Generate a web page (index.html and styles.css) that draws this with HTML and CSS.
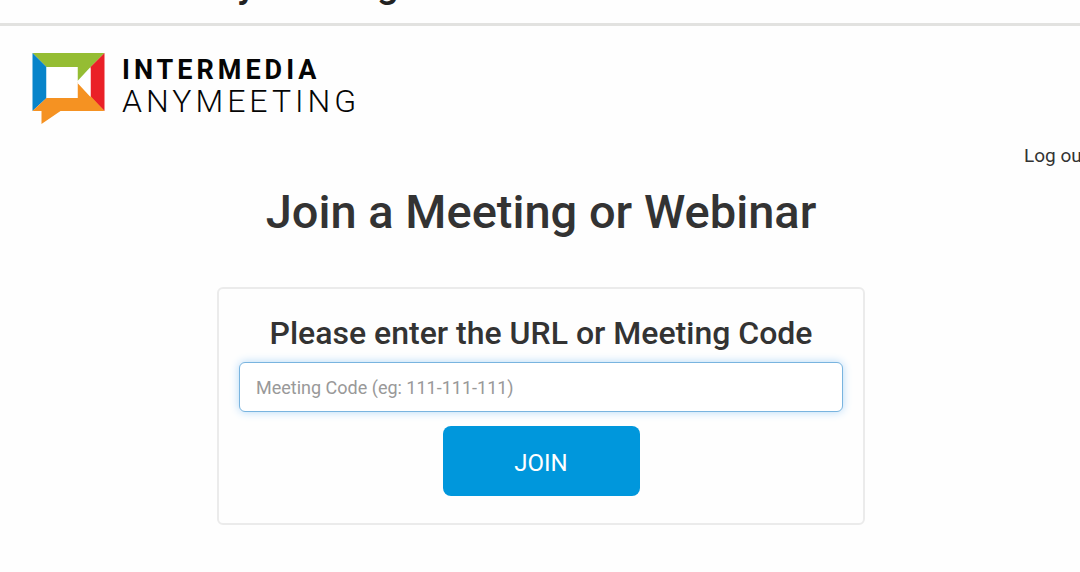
FILE: index.html
```html
<!DOCTYPE html>
<html lang="en">
<head>
<meta charset="utf-8">
<meta name="viewport" content="width=device-width, initial-scale=1">
<title>AnyMeeting</title>
<link rel="stylesheet" href="styles.css">
</head>
<body>
<div class="titlebar"><span class="titlebar-text">AnyMeeting</span></div>
<header class="header">
  <div class="brand">
    <svg class="brand-mark" viewBox="0 0 72 72" aria-hidden="true">
      <path fill="#95bd33" d="M0 0H72L58 14L45 28V14H14Z"/>
      <path fill="#0784ca" d="M0 0L14 14V45L0 58Z"/>
      <path fill="#ea2027" d="M72 0V58L58 44V14Z"/>
      <path fill="#f59222" d="M0 58L14 45H45V29L72 58H28L9 71V58Z"/>
      <path fill="#fff" d="M14 14H45V45H14ZM45 30L58 15V44Z"/>
    </svg>
    <div class="brand-name">
      <span class="brand-company">INTERMEDIA</span>
      <span class="brand-product">ANYMEETING</span>
    </div>
  </div>
  <nav class="account"><a class="logout" href="#">Log out</a></nav>
</header>
<main class="main">
  <h1 class="title">Join a Meeting or Webinar</h1>
  <form class="card">
    <label class="card-label" for="code">Please enter the URL or Meeting Code</label>
    <input class="code-input" id="code" type="text" placeholder="Meeting Code (eg: 111-111-111)">
    <button class="join" type="button">JOIN</button>
  </form>
</main>
</body>
</html>
```
FILE: styles.css
```css
* { box-sizing: border-box; }
body {
  margin: 0;
  background: #fefefe;
  color: #333;
  font-family: Roboto, "Liberation Sans", sans-serif;
  overflow-x: hidden;
}
.titlebar {
  display: flex;
  align-items: flex-end;
  height: 26px;
  padding: 0 0 19px 190px;
  border-bottom: 3px solid #e2e2e0;
  overflow: hidden;
}
.titlebar-text {
  color: #222;
  font-size: 39px;
  font-weight: 500;
  line-height: 40px;
}
.header { padding: 27px 0 0 32px; }
.brand { display: flex; gap: 17px; }
.brand-mark { width: 73px; height: 72px; }
.brand-name {
  display: flex;
  flex-direction: column;
  color: #050505;
}
.brand-company {
  font-size: 27px;
  font-weight: 700;
  line-height: 34px;
  letter-spacing: 4px;
}
.brand-product {
  font-size: 32px;
  font-weight: 300;
  line-height: 28px;
  letter-spacing: 4px;
}
.account {
  display: flex;
  justify-content: flex-end;
  margin-top: 19px;
  margin-right: -8px;
}
.logout {
  color: #333;
  font-size: 19px;
  line-height: 24px;
  text-decoration: none;
}
.main { padding: 16px 16px 40px 18px; }
.title {
  margin: 0 0 47px;
  font-size: 47px;
  font-weight: 500;
  line-height: 56px;
  text-align: center;
}
.card {
  display: flex;
  flex-direction: column;
  align-items: center;
  max-width: 648px;
  margin: 0 auto;
  padding: 24px 20px 27px;
  border: 2px solid #ebebeb;
  border-radius: 6px;
}
.card-label {
  margin-bottom: 9px;
  font-size: 32px;
  font-weight: 500;
  line-height: 40px;
  text-align: center;
}
.code-input {
  width: 100%;
  height: 50px;
  padding: 0 16px;
  border: 1px solid #79b4df;
  border-radius: 6px;
  outline: 0;
  background: #fff;
  box-shadow: 0 0 10px #b4d9f8;
  color: #333;
  font: 18px Roboto, "Liberation Sans", sans-serif;
}
.code-input::placeholder { color: #999; opacity: 1; }
.join {
  min-width: 197px;
  height: 70px;
  margin-top: 14px;
  padding-top: 4px;
  border: 0;
  border-radius: 8px;
  background: #0097dc;
  color: #fff;
  font: 24px Roboto, "Liberation Sans", sans-serif;
}
```
